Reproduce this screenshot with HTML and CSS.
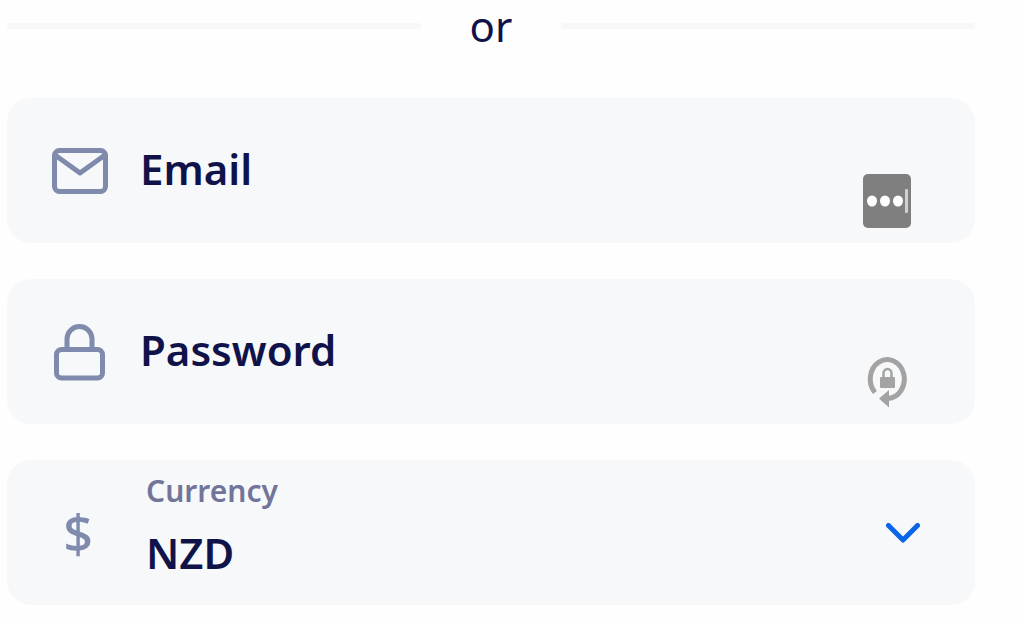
FILE: index.html
```html
<!DOCTYPE html>
<html lang="en">
<head>
    <meta charset="UTF-8">
    <meta name="viewport" content="width=device-width, initial-scale=1.0">
    <title>Sign up</title>
    <link rel="stylesheet" href="styles.css">
</head>
<body>
    <form class="signup">
        <div class="divider"><span>or</span></div>

        <div class="field">
            <svg class="icon" viewBox="0 0 56 58" aria-hidden="true">
                <rect x="2.500" y="8.500" width="51" height="41" rx="5"/>
                <path d="M3 13 L28 31 L53 13"/>
            </svg>
            <label for="email">Email</label>
            <input type="email" id="email" name="email">
            <button type="button" class="helper" aria-label="Fill from password manager">
                <svg viewBox="0 0 48 54">
                    <rect width="48" height="54" rx="5" fill="#7f7f7f"/>
                    <g fill="#fff">
                        <ellipse cx="9" cy="27" rx="5" ry="5.500"/>
                        <ellipse cx="22" cy="27" rx="5" ry="5.500"/>
                        <ellipse cx="35" cy="27" rx="5" ry="5.500"/>
                    </g>
                    <rect x="42" y="15" width="3" height="24" rx="1" fill="#d0d0d0"/>
                </svg>
            </button>
        </div>

        <div class="field">
            <svg class="icon" viewBox="0 0 56 58" aria-hidden="true">
                <rect x="4.500" y="26.500" width="46" height="28.500" rx="5"/>
                <path d="M15 26 V16 a12.500 12.500 0 0 1 25 0 V26"/>
            </svg>
            <label for="password">Password</label>
            <input type="password" id="password" name="password">
            <button type="button" class="helper" aria-label="Generate password">
                <svg viewBox="0 0 48 54">
                    <path d="M12 37.500 A17 19.500 0 1 1 25 43.500" fill="none" stroke="#a3a3a3" stroke-width="5"/>
                    <path d="M16 43.500 L26 35 V52.500 Z" fill="#a3a3a3"/>
                    <rect x="17" y="22" width="15" height="11" rx="1" fill="#a3a3a3"/>
                    <path d="M20.500 23 V18.500 a4 4.500 0 0 1 8 0 V23" fill="none" stroke="#a3a3a3" stroke-width="2.500"/>
                </svg>
            </button>
        </div>

        <div class="field">
            <span class="icon dollar" aria-hidden="true">$</span>
            <div class="stacked">
                <label for="currency">Currency</label>
                <select id="currency" name="currency">
                    <option>NZD</option>
                    <option>AUD</option>
                    <option>USD</option>
                </select>
            </div>
            <svg class="chevron" viewBox="0 0 34 20" aria-hidden="true">
                <path d="M2.500 2.500 L17 17 L31.500 2.500"/>
            </svg>
        </div>
    </form>
</body>
</html>
```
FILE: styles.css
```css
* {
    margin: 0;
    padding: 0;
    box-sizing: border-box;
}

body {
    background: #fefefe;
    color: #10134a;
    font-family: 'Noto Sans', 'Open Sans', sans-serif;
    font-size: 42px;
}

.signup {
    display: flex;
    flex-direction: column;
    gap: 36px;
    padding: 0 49px 18px 7px;
}

.divider {
    display: flex;
    align-items: center;
    line-height: 52px;
    margin-bottom: 10px;
}

.divider::before,
.divider::after {
    content: '';
    flex: 1;
    height: 6px;
    border-radius: 2px;
    background: #f7f8fa;
}

.divider span {
    width: 140px;
    text-align: center;
}

.field {
    display: flex;
    align-items: center;
    min-height: 145px;
    padding: 0 55px 0 45px;
    background: #f7f8fa;
    border-radius: 24px;
}

.icon {
    flex: none;
    width: 56px;
    height: 58px;
    margin-right: 32px;
    fill: none;
    stroke: #7f8aad;
    stroke-width: 5;
    stroke-linejoin: round;
}

.dollar {
    color: #7f8aad;
    font-size: 52px;
    font-weight: 500;
    line-height: 58px;
    padding-right: 4px;
    text-align: center;
}

label {
    font-weight: 600;
    padding-bottom: 5px;
}

input,
select {
    flex: 1;
    min-width: 0;
    border: none;
    outline: none;
    background: transparent;
    color: inherit;
    font: inherit;
    font-weight: 600;
}

input {
    padding: 0 16px;
}

.helper {
    align-self: flex-end;
    width: 48px;
    height: 54px;
    margin: 0 9px 15px 0;
    border: none;
    background: none;
    cursor: pointer;
}

.helper svg {
    display: block;
    width: 100%;
}

.stacked {
    flex: 1;
    display: flex;
    flex-direction: column;
    padding: 0 0 8px 6px;
}

.stacked label {
    color: #71759a;
    font-size: 30px;
    line-height: 48px;
    padding: 0;
}

.stacked select {
    appearance: none;
    flex: none;
    height: 76px;
    cursor: pointer;
}

.chevron {
    flex: none;
    width: 34px;
    height: 20px;
    fill: none;
    stroke: #0a66e8;
    stroke-width: 5;
    stroke-linecap: round;
    stroke-linejoin: round;
}
```
